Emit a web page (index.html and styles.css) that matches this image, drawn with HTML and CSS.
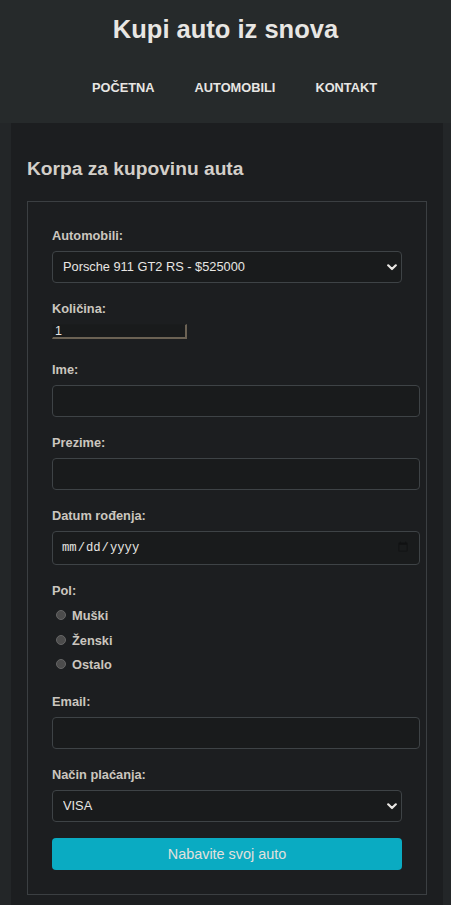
FILE: index.html
```html
<!DOCTYPE html>
<html lang="sr">
<head>
<meta charset="utf-8">
<title>Kupi auto iz snova</title>
<link rel="stylesheet" href="styles.css">
</head>
<body>
<header class="site-header">
  <h1 class="site-title">Kupi auto iz snova</h1>
  <nav class="site-nav">
    <a href="#" class="nav-link">POČETNA</a>
    <a href="#" class="nav-link">AUTOMOBILI</a>
    <a href="#" class="nav-link">KONTAKT</a>
  </nav>
</header>
<main class="container">
  <h2 class="page-heading">Korpa za kupovinu auta</h2>
  <form class="cart-form">
    <div class="group">
      <label class="field-label" for="auto">Automobili:</label>
      <div class="select-wrap">
        <select id="auto" class="select">
          <option>Porsche 911 GT2 RS - $525000</option>
        </select>
        <svg class="chevron" width="10" height="7" viewBox="0 0 10 7"><path d="M1.2 1.3 L5 5 L8.8 1.3" fill="none" stroke="#e8e6e3" stroke-width="2.2" stroke-linecap="round" stroke-linejoin="round"/></svg>
      </div>
    </div>
    <div class="group">
      <label class="field-label" for="kolicina">Količina:</label>
      <input id="kolicina" class="qty" type="text" value="1">
    </div>
    <div class="group">
      <label class="field-label" for="ime">Ime:</label>
      <input id="ime" class="text-input" type="text">
    </div>
    <div class="group">
      <label class="field-label" for="prezime">Prezime:</label>
      <input id="prezime" class="text-input" type="text">
    </div>
    <div class="group">
      <label class="field-label" for="datum">Datum rođenja:</label>
      <input id="datum" class="text-input date-input" type="date">
    </div>
    <div class="group group-radio">
      <span class="field-label">Pol:</span>
      <div class="radio-list">
        <label class="radio-row"><span class="radio-dot"></span>Muški</label>
        <label class="radio-row"><span class="radio-dot"></span>Ženski</label>
        <label class="radio-row"><span class="radio-dot"></span>Ostalo</label>
      </div>
    </div>
    <div class="group">
      <label class="field-label" for="email">Email:</label>
      <input id="email" class="text-input" type="text">
    </div>
    <div class="group">
      <label class="field-label" for="placanje">Način plaćanja:</label>
      <div class="select-wrap">
        <select id="placanje" class="select">
          <option>VISA</option>
        </select>
        <svg class="chevron" width="10" height="7" viewBox="0 0 10 7"><path d="M1.2 1.3 L5 5 L8.8 1.3" fill="none" stroke="#e8e6e3" stroke-width="2.2" stroke-linecap="round" stroke-linejoin="round"/></svg>
      </div>
    </div>
    <button type="button" class="submit">Nabavite svoj auto</button>
  </form>
</main>
</body>
</html>
```
FILE: styles.css
```css
html, body {
  margin: 0;
  padding: 0;
}
body {
  background: #232628;
  font-family: "Liberation Sans", Arial, sans-serif;
  color: #e8e6e3;
  min-height: 905px;
}
.site-header {
  background: #262a2b;
  height: 123px;
  box-sizing: border-box;
  padding-top: 14px;
}
.site-title {
  margin: 0;
  text-align: center;
  font-size: 25.5px;
  line-height: 30px;
  font-weight: bold;
  color: #e8e6e3;
}
.site-nav {
  margin-top: 34px;
  display: flex;
  justify-content: center;
  gap: 40px;
  padding-left: 18px;
}
.nav-link {
  color: #e8e6e3;
  text-decoration: none;
  font-weight: bold;
  font-size: 12.8px;
  line-height: 20px;
}
.container {
  margin-left: 11px;
  width: 432px;
  box-sizing: border-box;
  padding: 33.5px 16px 0;
  background: #1c1e20;
  min-height: 782px;
}
.page-heading {
  margin: 0 0 20.5px;
  font-size: 19.2px;
  line-height: 24px;
  font-weight: bold;
  color: #d3cfc9;
}
.cart-form {
  border: 1px solid #3b3f42;
  padding: 24px 24px 24px;
}
.group {
  margin-bottom: 16px;
}
.field-label {
  display: block;
  font-size: 12.8px;
  line-height: 20px;
  font-weight: bold;
  color: #cbc6bf;
  margin-bottom: 5px;
}
.select-wrap {
  position: relative;
  width: 350px;
}
.select {
  display: block;
  width: 100%;
  height: 31.5px;
  box-sizing: border-box;
  -webkit-appearance: none;
  appearance: none;
  background: #191b1c;
  border: 1px solid #3e4346;
  border-radius: 4px;
  color: #e8e6e3;
  font-family: "Liberation Sans", Arial, sans-serif;
  font-size: 12.8px;
  padding: 0 24px 0 10px;
  outline: none;
}
.chevron {
  position: absolute;
  right: 5px;
  top: 12.5px;
  pointer-events: none;
}
.qty {
  display: block;
  box-sizing: border-box;
  width: 135px;
  height: 15px;
  margin: 3px 0 21px;
  padding: 0 2px;
  background: #191b1c;
  border-style: solid;
  border-width: 1px 2px 2px 1px;
  border-color: #1a1c1d #6b6254 #6b6254 #1a1c1d;
  color: #e8e6e3;
  font-family: "Liberation Sans", Arial, sans-serif;
  font-size: 12.5px;
  line-height: 12px;
  outline: none;
}
.text-input {
  display: block;
  width: 100%;
  height: 30px;
  padding: 0 8px;
  margin: 0;
  box-sizing: content-box;
  background: #191b1c;
  border: 1px solid #3e4346;
  border-radius: 4px;
  color: #e8e6e3;
  font-family: "Liberation Sans", Arial, sans-serif;
  font-size: 12.8px;
  outline: none;
}
.date-input {
  height: 32px;
  font-family: "Liberation Mono", monospace;
  font-size: 12.2px;
  color: #e8e6e3;
}
.date-input::-webkit-calendar-picker-indicator {
  opacity: 0.35;
  filter: brightness(0.2);
}
.group-radio {
  margin-bottom: 15px;
}
.radio-list {
  margin-top: -2px;
}
.radio-row {
  display: flex;
  align-items: center;
  height: 24.5px;
  font-size: 12.8px;
  font-weight: bold;
  color: #cbc6bf;
  padding-left: 4px;
}
.radio-dot {
  width: 8px;
  height: 8px;
  border-radius: 50%;
  background: #4c4c4c;
  border: 1px solid #666;
  margin-right: 6px;
  margin-top: -1px;
}
.submit {
  display: block;
  width: 350px;
  height: 32px;
  border: none;
  border-radius: 4px;
  background: #0aabc2;
  color: #e3e0dc;
  font-family: "Liberation Sans", Arial, sans-serif;
  font-size: 14.4px;
  cursor: pointer;
}
```
